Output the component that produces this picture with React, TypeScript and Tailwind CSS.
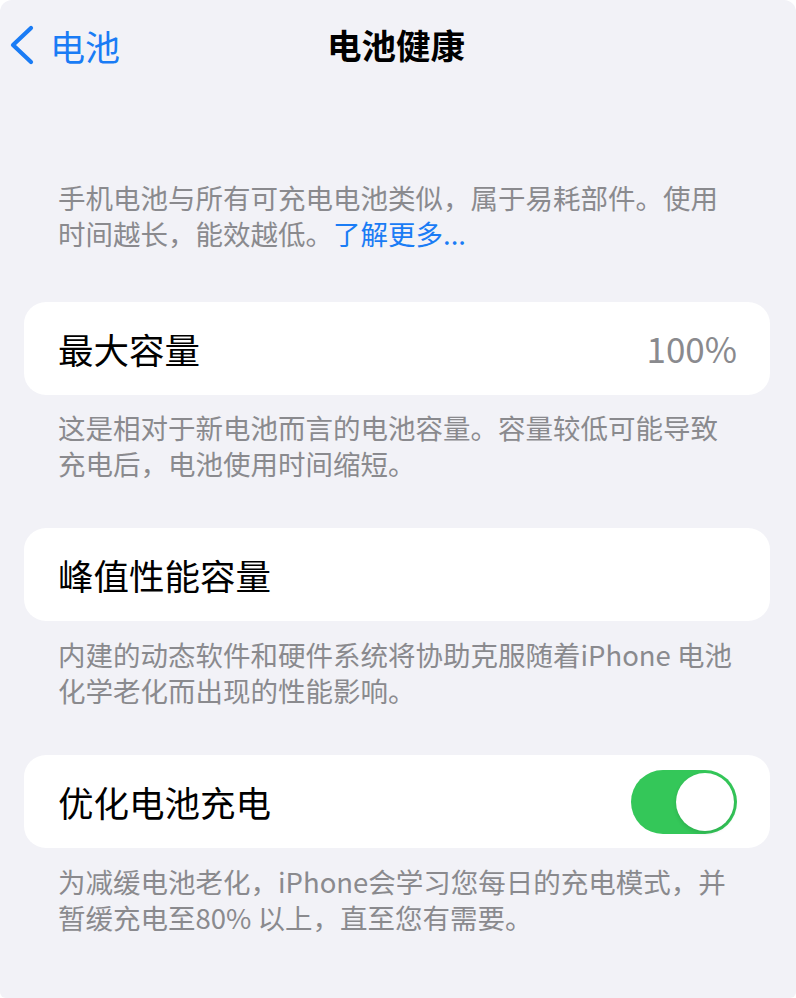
const font = { fontFamily: '"Noto Sans CJK SC", "Noto Sans", sans-serif' };

function Chevron() {
  return (
    <svg width="28" height="40" viewBox="0 0 28 40" fill="none">
      <path
        d="M23 3 L5 20 L23 37"
        stroke="#1a7cf5"
        strokeWidth="4.2"
        strokeLinecap="round"
        strokeLinejoin="round"
      />
    </svg>
  );
}

function Toggle() {
  return (
    <div className="relative h-[64px] w-[106px] rounded-full bg-[#34c759]">
      <div className="absolute right-[3px] top-[3px] h-[58px] w-[58px] rounded-full bg-white shadow-[0_2px_4px_rgba(0,0,0,0.12)]" />
    </div>
  );
}

function Note({ lines, className = "" }: { lines: React.ReactNode[]; className?: string }) {
  return (
    <div className={`px-[58px] text-[27.5px] leading-[36px] text-[#8a8a8e] ${className}`}>
      {lines.map((l, i) => (
        <div key={i} className="whitespace-nowrap">
          {l}
        </div>
      ))}
    </div>
  );
}

function Row({ label, right }: { label: string; right?: React.ReactNode }) {
  return (
    <div className="ml-[24px] mr-[26px] flex h-[93px] items-center justify-between rounded-[22px] bg-white pl-[34px] pr-[33px]">
      <span className="text-[35.5px] text-black">{label}</span>
      {right}
    </div>
  );
}

export default function App() {
  return (
    <div className="min-h-screen bg-white" style={font}>
      <div className="h-[998px] w-[796px] overflow-hidden rounded-t-[12px] rounded-b-[6px] bg-[#f2f2f7]">
        {/* nav bar */}
        <div className="relative flex h-[90px] items-center justify-center">
          <div className="absolute left-[8px] top-[25px] flex items-center gap-[14px]">
            <Chevron />
            <span className="text-[35px] leading-none text-[#1a7cf5]">电池</span>
          </div>
          <span className="pr-[4px] text-[34.5px] font-bold text-black">电池健康</span>
        </div>

        <Note
          className="mt-[89px]"
          lines={[
            "手机电池与所有可充电电池类似，属于易耗部件。使用",
            <>
              时间越长，能效越低。<span className="text-[#1a7cf5]">了解更多...</span>
            </>,
          ]}
        />

        <div className="mt-[51px]">
          <Row label="最大容量" right={<span className="text-[35px] text-[#8a8a8e]">100%</span>} />
        </div>
        <Note
          className="mt-[14px]"
          lines={["这是相对于新电池而言的电池容量。容量较低可能导致", "充电后，电池使用时间缩短。"]}
        />

        <div className="mt-[47px]">
          <Row label="峰值性能容量" />
        </div>
        <Note
          className="mt-[15px]"
          lines={["内建的动态软件和硬件系统将协助克服随着iPhone 电池", "化学老化而出现的性能影响。"]}
        />

        <div className="mt-[47px]">
          <Row label="优化电池充电" right={<Toggle />} />
        </div>
        <Note
          className="mt-[15px]"
          lines={["为减缓电池老化，iPhone会学习您每日的充电模式，并", "暂缓充电至80% 以上，直至您有需要。"]}
        />
      </div>
    </div>
  );
}
